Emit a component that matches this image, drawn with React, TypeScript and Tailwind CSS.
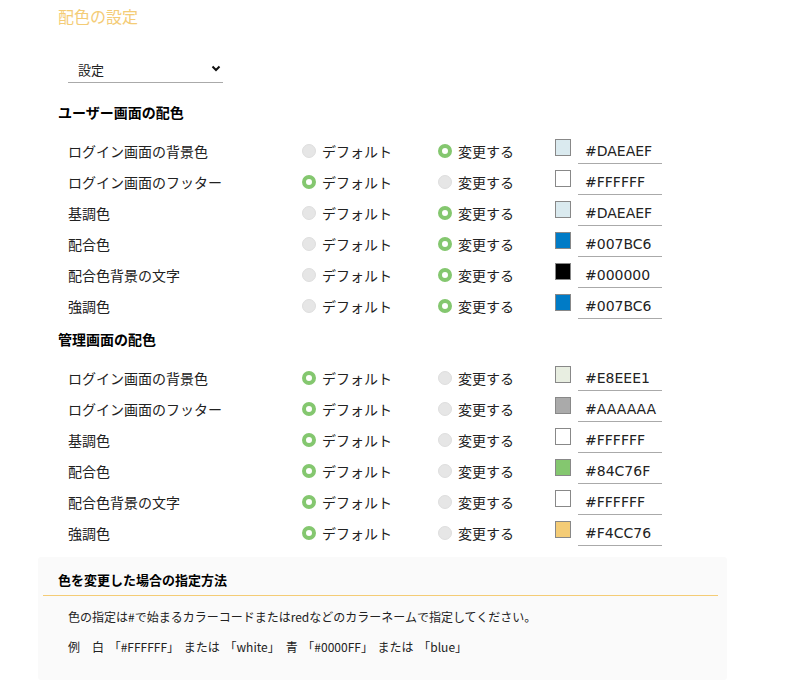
import { useState } from "react";

type Row = { label: string; useDefault: boolean; color: string };

const userRows: Row[] = [
  { label: "ログイン画面の背景色", useDefault: false, color: "#DAEAEF" },
  { label: "ログイン画面のフッター", useDefault: true, color: "#FFFFFF" },
  { label: "基調色", useDefault: false, color: "#DAEAEF" },
  { label: "配合色", useDefault: false, color: "#007BC6" },
  { label: "配合色背景の文字", useDefault: false, color: "#000000" },
  { label: "強調色", useDefault: false, color: "#007BC6" },
];

const adminRows: Row[] = [
  { label: "ログイン画面の背景色", useDefault: true, color: "#E8EEE1" },
  { label: "ログイン画面のフッター", useDefault: true, color: "#AAAAAA" },
  { label: "基調色", useDefault: true, color: "#FFFFFF" },
  { label: "配合色", useDefault: true, color: "#84C76F" },
  { label: "配合色背景の文字", useDefault: true, color: "#FFFFFF" },
  { label: "強調色", useDefault: true, color: "#F4CC76" },
];

function Radio({ checked, label, onClick }: { checked: boolean; label: string; onClick: () => void }) {
  return (
    <button type="button" onClick={onClick} className="flex items-center gap-[6px] h-[26px]">
      {checked ? (
        <span className="w-[14px] h-[14px] rounded-full border-[4px] border-[#84C76F] bg-white" />
      ) : (
        <span className="w-[14px] h-[14px] rounded-full bg-[#e6e6e6] border border-[#dedede]" />
      )}
      <span className="text-[14px] text-[#222]">{label}</span>
    </button>
  );
}

function ColorRow({ row }: { row: Row }) {
  const [useDefault, setUseDefault] = useState(row.useDefault);
  const [value, setValue] = useState(row.color);

  return (
    <div className="flex items-start h-[31px]">
      <div className="w-[234px] h-[26px] flex items-center text-[14px] text-[#222]">{row.label}</div>
      <div className="w-[136px]">
        <Radio checked={useDefault} label="デフォルト" onClick={() => setUseDefault(true)} />
      </div>
      <div className="w-[117px]">
        <Radio checked={!useDefault} label="変更する" onClick={() => setUseDefault(false)} />
      </div>
      <span
        className="mt-px w-[16px] h-[17px] border border-[#888]"
        style={{ backgroundColor: row.color }}
      />
      <input
        value={value}
        onChange={(e) => setValue(e.target.value)}
        className="ml-[7px] w-[84px] h-[26px] pl-[7px] border-b border-[#aaa] outline-none text-[14px] text-[#222] font-['DejaVu_Sans',sans-serif]"
      />
    </div>
  );
}

export default function App() {
  return (
    <main className="min-h-screen bg-white pt-[4px] font-['Noto_Sans_CJK_JP','Noto_Sans',sans-serif] text-[#222]">
      <h1 className="pl-[58px] text-[16px] leading-[24px] text-[#F4CC76]">配色の設定</h1>

      <div className="ml-[68px] mt-[28px] relative w-[155px]">
        <select className="appearance-none w-full h-[26px] pl-[10px] bg-white border-b border-[#aaa] text-[13px] outline-none">
          <option>設定</option>
        </select>
        <svg className="absolute right-[2px] top-[9px] pointer-events-none" width="10" height="7" viewBox="0 0 10 7">
          <path d="M1.5 1.5 5 5 8.5 1.5" fill="none" stroke="#111" strokeWidth="2" />
        </svg>
      </div>

      <h2 className="mt-[19px] pl-[58px] text-[14px] leading-[20px] font-bold text-black">ユーザー画面の配色</h2>
      <div className="pl-[68px] mt-[16px]">
        {userRows.map((r) => (
          <ColorRow key={"u" + r.label} row={r} />
        ))}
      </div>

      <h2 className="mt-[5px] pl-[58px] text-[14px] leading-[20px] font-bold text-black">管理画面の配色</h2>
      <div className="pl-[68px] mt-[16px]">
        {adminRows.map((r) => (
          <ColorRow key={"a" + r.label} row={r} />
        ))}
      </div>

      <section className="mt-[6px] ml-[38px] w-[689px] bg-[#fafafa] rounded-[3px] pt-[14px] pb-[24px]">
        <h3 className="pl-[20px] text-[13px] leading-[18px] font-bold text-black">色を変更した場合の指定方法</h3>
        <div className="mt-[6px] ml-[5px] mr-[9px] border-t border-[#F4CC76]" />
        <p className="mt-[12px] pl-[30px] text-[12px] leading-[18px] text-[#222]">
          色の指定は#で始まるカラーコードまたはredなどのカラーネームで指定してください。
        </p>
        <p className="mt-[12px] pl-[30px] text-[12px] leading-[18px] text-[#222] whitespace-pre [word-spacing:2px]">
          {"例\u3000白 「#FFFFFF」 または 「white」\u3000青 「#0000FF」 または 「blue」"}
        </p>
      </section>
    </main>
  );
}
